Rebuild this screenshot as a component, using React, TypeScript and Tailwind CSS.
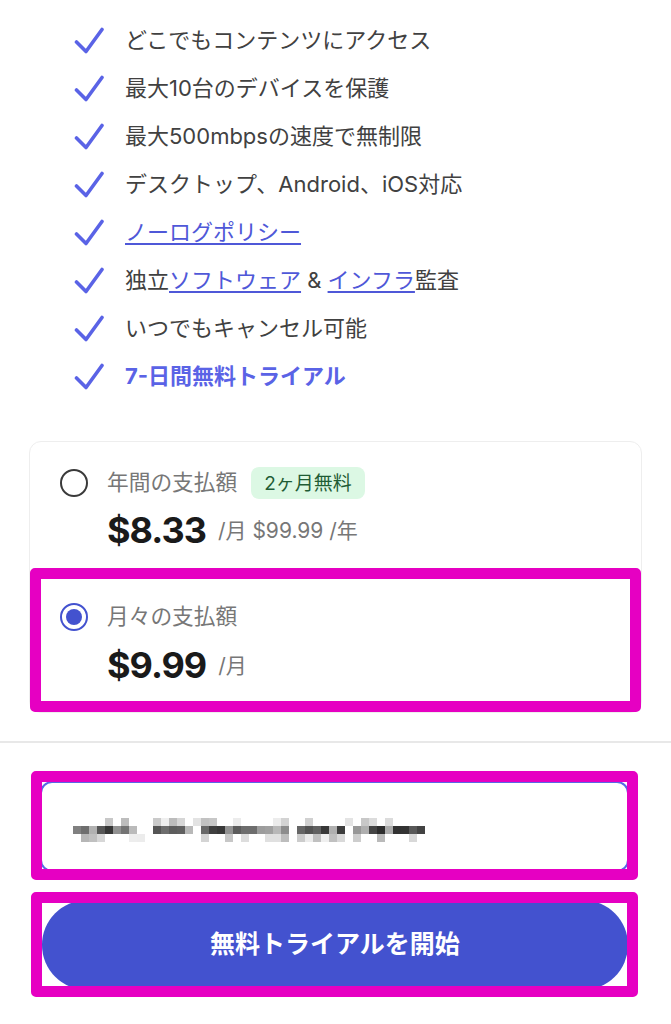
import React from "react";

const FONT = { fontFamily: '"Inter", "Noto Sans CJK JP", sans-serif' };

function Check() {
  return (
    <svg width="30" height="27" viewBox="0 0 30 27" className="shrink-0">
      <path d="M2.5 15 L12 24.5 L28 2.5" fill="none" stroke="#5a63e6" strokeWidth="3.6" strokeLinecap="round" strokeLinejoin="round" />
    </svg>
  );
}

function Mosaic() {
  const cells: { x: number; y: number; c: string }[] = [];
  let s = 7;
  const rnd = () => {
    s = (s * 9301 + 49297) % 233280;
    return s / 233280;
  };
  const gaps = [[135, 150], [188, 196], [282, 290], [340, 348]];
  for (let x = 0; x < 350; x += 8) {
    const inGap = gaps.some(([a, b]) => x + 73 >= a && x + 73 < b);
    for (let r = 0; r < 3; r++) {
      const v = rnd();
      if (inGap && v < 0.8) continue;
      if (r !== 1 && v < 0.5) continue;
      const shade = r === 1 ? 20 + Math.floor(v * 170) : 110 + Math.floor(v * 130);
      const hex = shade.toString(16).padStart(2, "0");
      cells.push({ x, y: r * 8, c: `#${hex}${hex}${hex}` });
    }
  }
  return (
    <svg width="352" height="24" viewBox="0 0 352 24">
      {cells.map((c, i) => (
        <rect key={i} x={c.x} y={c.y} width="8" height="8" fill={c.c} />
      ))}
    </svg>
  );
}

export default function App() {
  const link = "text-[#4f58d8] underline underline-offset-[3px] decoration-[1.5px]";
  const items: React.ReactNode[] = [
    <span>どこでもコンテンツにアクセス</span>,
    <span>最大10台のデバイスを保護</span>,
    <span>最大500mbpsの速度で無制限</span>,
    <span>デスクトップ、Android、iOS対応</span>,
    <span className={link}>ノーログポリシー</span>,
    <span>
      独立<span className={link}>ソフトウェア</span> &amp; <span className={link}>インフラ</span>監査
    </span>,
    <span>いつでもキャンセル可能</span>,
    <span className="font-bold text-[#5a63e6]">7-日間無料トライアル</span>,
  ];

  return (
    <div className="w-[671px] h-[1024px] bg-white overflow-hidden" style={FONT}>
      <ul className="pt-[16px] pl-[74px] flex flex-col">
        {items.map((it, i) => (
          <li key={i} className="h-[48px] flex items-center gap-[21px] text-[22px] text-[#414141] leading-none">
            <Check />
            {it}
          </li>
        ))}
      </ul>

      <div className="mt-[41px] ml-[29px] w-[613px] border border-[#eeeeee] rounded-[12px] bg-white">
        <div className="pt-[25px] pb-[18px] pl-[30px]">
          <div className="flex items-center h-[32px]">
            <div className="w-[28px] h-[28px] rounded-full border-2 border-[#3a3a3a]" />
            <span className="ml-[19px] text-[21.7px] text-[#777777] leading-none">年間の支払額</span>
            <span className="ml-[14px] h-[32px] px-[13px] flex items-center rounded-[8px] bg-[#dcf8e4] text-[#1f5c35] text-[19px] leading-none">
              2ヶ月無料
            </span>
          </div>
          <div className="mt-[11px] h-[40px] flex items-center pl-[47px]">
            <span className="text-[36px] font-bold text-[#1a1a1a] leading-none tracking-[-1px]">$8.33</span>
            <span className="ml-[12px] text-[21px] text-[#777777] leading-none">/月 $99.99 /年</span>
          </div>
        </div>
        <div className="border-[11px] border-[#e600c2] rounded-[5px] pt-[22px] pb-[16px] pl-[19px]">
          <div className="flex items-center h-[32px]">
            <div className="w-[28px] h-[28px] rounded-full border-2 border-[#4352cf] flex items-center justify-center">
              <div className="w-[16px] h-[16px] rounded-full bg-[#4352cf]" />
            </div>
            <span className="ml-[19px] text-[21.7px] text-[#777777] leading-none">月々の支払額</span>
          </div>
          <div className="mt-[12px] h-[40px] flex items-center pl-[47px]">
            <span className="text-[36px] font-bold text-[#1a1a1a] leading-none tracking-[-1px]">$9.99</span>
            <span className="ml-[12px] text-[21px] text-[#777777] leading-none">/月</span>
          </div>
        </div>
      </div>

      <div className="mt-[28px] h-[2px] bg-[#e8e8e8]" />

      <div className="relative mt-[38px] ml-[40px] w-[589px] h-[91px]">
        <div className="w-full h-full rounded-[12px] border-2 border-[#5868e6] bg-white flex items-center pl-[31px]">
          <div className="opacity-90 mt-[6px]">
            <Mosaic />
          </div>
        </div>
        <div className="absolute left-[-9px] top-[-10px] right-[-9px] bottom-[-8px] border-[11px] border-[#e600c2] rounded-[5px] pointer-events-none" />
      </div>

      <div className="relative mt-[28px] ml-[42px] w-[586px] h-[90px]">
        <button className="w-full h-full rounded-full bg-[#4352cf] text-white text-[25px] font-semibold flex items-center justify-center" style={FONT}>
          無料トライアルを開始
        </button>
        <div className="absolute left-[-11px] top-[-8px] right-[-10px] bottom-[-7px] border-[11px] border-[#e600c2] rounded-[5px] pointer-events-none" />
      </div>
    </div>
  );
}
